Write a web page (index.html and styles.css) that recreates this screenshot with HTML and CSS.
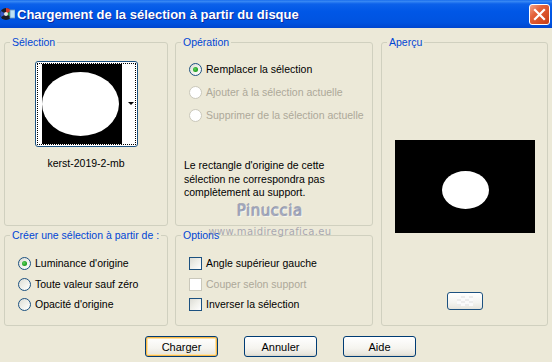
FILE: index.html
```html
<!DOCTYPE html>
<html lang="fr">
  <head>
    <meta charset="UTF-8" />
    <meta name="viewport" content="width=device-width, initial-scale=1.0" />
    <title>Chargement de la sélection à partir du disque</title>
    <link rel="stylesheet" href="styles.css">
  </head>
  <body>
    <div class="window">
      <div class="titlebar">
        <svg class="app-icon" width="15" height="14" viewBox="0 0 15 14">
          <circle cx="6" cy="7" r="6" fill="#1c1c24" />
          <path d="M6 7 L6 1 A6 6 0 0 1 11.2 4 Z" fill="#d23a2a" />
          <path d="M6 7 L11.2 4 A6 6 0 0 1 11.2 10 Z" fill="#2a9a3a" />
          <path d="M6 7 L1 10 A6 6 0 0 1 1 4 Z" fill="#3a5ac8" />
          <circle cx="6" cy="7" r="2" fill="#e8e8e8" />
          <rect x="10" y="3" width="5" height="8" fill="#bfe3f5" stroke="#6a9ac0" stroke-width="0.8" />
        </svg>
        <span class="title">Chargement de la sélection à partir du disque</span>
        <span class="close-btn">
          <svg width="13" height="13" viewBox="0 0 13 13">
            <path d="M2 2 L11 11 M11 2 L2 11" stroke="#fff" stroke-width="2.2" stroke-linecap="square" />
          </svg>
        </span>
      </div>

      <div class="content">
        <div class="columns">
          <div class="col col-left">
            <fieldset class="group group-source">
              <legend>Sélection</legend>
              <div class="thumb">
                <div class="thumb-focus">
                  <svg class="thumb-img" width="80" height="80" viewBox="0 0 80 80">
                    <rect width="80" height="80" fill="#000" />
                    <ellipse cx="38.5" cy="40" rx="38.5" ry="32" fill="#fff" />
                  </svg>
                  <span class="thumb-drop"><span class="arrow"></span></span>
                </div>
              </div>
              <div class="thumb-name">kerst-2019-2-mb</div>
            </fieldset>

            <fieldset class="group group-create">
              <legend>Créer une sélection à partir de :</legend>
              <div class="choices choices-tight">
                <div class="choice"><span class="radio checked"></span>Luminance d'origine</div>
                <div class="choice"><span class="radio"></span>Toute valeur sauf zéro</div>
                <div class="choice"><span class="radio"></span>Opacité d'origine</div>
              </div>
            </fieldset>
          </div>

          <div class="col col-mid">
            <fieldset class="group group-operation">
              <legend>Opération</legend>
              <div class="choices">
                <div class="choice"><span class="radio checked"></span>Remplacer la sélection</div>
                <div class="choice disabled"><span class="radio"></span>Ajouter à la sélection actuelle</div>
                <div class="choice disabled"><span class="radio"></span>Supprimer de la sélection actuelle</div>
              </div>
              <p class="note">Le rectangle d'origine de cette<br>sélection ne correspondra pas<br>complètement au support.</p>
            </fieldset>

            <fieldset class="group group-options">
              <legend>Options</legend>
              <div class="choices choices-tight">
                <div class="choice"><span class="check"></span>Angle supérieur gauche</div>
                <div class="choice disabled"><span class="check"></span>Couper selon support</div>
                <div class="choice"><span class="check"></span>Inverser la sélection</div>
              </div>
            </fieldset>
          </div>

          <fieldset class="group group-preview">
            <legend>Aperçu</legend>
            <svg class="preview-img" width="140" height="93" viewBox="0 0 140 93">
              <rect width="140" height="93" fill="#000" />
              <ellipse cx="70.5" cy="50" rx="23.5" ry="19" fill="#fff" />
            </svg>
            <span class="preview-btn"><span class="checker"></span></span>
          </fieldset>
        </div>

        <div class="buttons">
          <button type="button" class="btn btn-default">Charger</button>
          <button type="button" class="btn">Annuler</button>
          <button type="button" class="btn">Aide</button>
        </div>
      </div>

      <div class="watermark">
        <span class="wm-name">Pinuccia</span>
        <span class="wm-site">www.maidiregrafica.eu</span>
      </div>
    </div>
  </body>
</html>
```

FILE: styles.css
```css
* {
  box-sizing: border-box;
}

body {
  margin: 0;
  background: #ece9d8;
  font-family: "Liberation Sans", Arial, sans-serif;
  font-size: 10.5px;
  color: #000;
}

.window {
  position: relative;
  width: 552px;
  height: 362px;
  background: #ece9d8;
  overflow: hidden;
}

/* title bar */
.titlebar {
  display: flex;
  align-items: center;
  height: 28px;
  background: linear-gradient(#0a5fe8 0, #3d8df5 1px, #0c61ea 4px, #0057e6 40%, #0053e0 80%, #0046cf 100%);
  color: #fff;
}

.app-icon {
  margin-right: 2px;
}

.title {
  font-weight: bold;
  font-size: 13px;
  text-shadow: 1px 1px 0 #0f2a9c;
}

.close-btn {
  display: flex;
  align-items: center;
  justify-content: center;
  width: 21px;
  height: 21px;
  margin-left: auto;
  margin-right: 2px;
  border: 1px solid #fff;
  border-radius: 3px;
  background: linear-gradient(135deg, #f2a58c 0, #e4623a 35%, #d44b22 75%, #c23d18 100%);
}

/* body */
.content {
  padding: 8px 4px 0;
}

.columns {
  display: flex;
  gap: 7px;
  height: 290px;
}

.col {
  display: flex;
  flex-direction: column;
  gap: 3px;
}

.col-left {
  width: 164px;
}

.col-mid {
  width: 198px;
}

.group {
  margin: 0;
  padding: 0;
  min-width: 0;
  border: 1px solid #d0d0bf;
  border-radius: 3px;
}

.group legend {
  margin-left: 5px;
  padding: 0 2px;
  line-height: 13px;
  white-space: nowrap;
  color: #0046d5;
}

.group-source,
.group-operation {
  height: 190px;
}

.group-create,
.group-options {
  flex: 1;
}

.group-preview {
  flex: 1;
  margin-left: 1px;
  display: flex;
  flex-direction: column;
  align-items: center;
}

/* selection thumbnail */
.thumb {
  display: flex;
  width: 103px;
  height: 86px;
  margin: 12px auto 0;
  padding: 1px;
  border: 1px solid #1c5180;
  border-radius: 3px;
  background: #fff;
}

.thumb-focus {
  flex: 1;
  display: flex;
  padding-left: 4px;
  border: 1px dotted #000;
}

.thumb-img {
  display: block;
}

.thumb-drop {
  flex: 1;
  display: flex;
  align-items: center;
  justify-content: flex-end;
  padding: 0 1px 2px 0;
}

.arrow {
  border-left: 3px solid transparent;
  border-right: 3px solid transparent;
  border-top: 3px solid #000;
}

.thumb-name {
  margin-top: 10px;
  text-align: center;
  line-height: 13px;
}

/* radios and checkboxes */
.choices {
  display: flex;
  flex-direction: column;
  gap: 10px;
  margin: 14px 0 0 13px;
}

.choices-tight {
  gap: 7.5px;
  margin-top: 15px;
}

.choice {
  display: flex;
  align-items: center;
  gap: 4px;
  height: 13px;
  line-height: 13px;
  white-space: nowrap;
}

.radio {
  position: relative;
  flex: none;
  width: 13px;
  height: 13px;
  border: 1px solid #1c5180;
  border-radius: 50%;
  background: linear-gradient(135deg, #dcdcd5 0, #eeeee8 45%, #fff 100%);
}

.radio.checked::after {
  content: "";
  position: absolute;
  left: 3px;
  top: 3px;
  width: 5px;
  height: 5px;
  border-radius: 50%;
  background: radial-gradient(circle at 40% 40%, #5fd35f 0, #21a121 60%, #1a8a1a 100%);
}

.check {
  flex: none;
  width: 13px;
  height: 13px;
  border: 1px solid #1c5180;
  background: linear-gradient(135deg, #dcdcd5 0, #eeeee8 45%, #fff 100%);
}

.choice.disabled {
  color: #aca899;
}

.choice.disabled .radio,
.choice.disabled .check {
  border-color: #cac8bb;
  background: #fff;
}

.note {
  margin: 37px 0 0 8px;
  line-height: 13.5px;
}

/* preview */
.preview-img {
  display: block;
  margin-top: 91px;
}

.preview-btn {
  display: flex;
  align-items: center;
  justify-content: center;
  width: 36px;
  height: 18px;
  margin-top: 59px;
  border: 1px solid #1c5180;
  border-radius: 3px;
  background: linear-gradient(#fff 0, #f4f4f0 60%, #e6e4dc 100%);
}

.checker {
  width: 16px;
  height: 10px;
  background: repeating-conic-gradient(#ececec 0 25%, #fafafa 0 50%) 0 0 / 8px 5px;
}

/* buttons */
.buttons {
  display: flex;
  justify-content: center;
  gap: 26px;
  margin-top: 10px;
  padding-left: 9px;
}

.btn {
  width: 73px;
  height: 21px;
  padding: 0;
  border: 1px solid #003c74;
  border-radius: 3px;
  background: linear-gradient(#fff 0, #f5f4ef 60%, #e8e6dd 90%, #d8d4c8 100%);
  font-family: "Liberation Sans", Arial, sans-serif;
  font-size: 11px;
  color: #000;
}

.btn-default {
  box-shadow: inset 0 0 0 1px #f7b84a, inset 0 0 0 2px #fde3a6;
}

/* watermark over the dialog */
.watermark {
  position: absolute;
  left: 208px;
  top: 202px;
  width: 124px;
  display: flex;
  flex-direction: column;
  align-items: center;
  pointer-events: none;
}

.wm-name {
  font-family: "DejaVu Sans", sans-serif;
  font-size: 15px;
  letter-spacing: 0.5px;
  line-height: 18px;
  color: rgba(160, 166, 190, 0.9);
  text-shadow: -1px 0 0 rgba(110, 118, 150, 0.55), 0 -1px 0 rgba(110, 118, 150, 0.55), 1px 1px 0 rgba(255, 255, 255, 0.6);
}

.wm-site {
  margin-top: 6px;
  font-family: "DejaVu Sans", sans-serif;
  font-size: 10px;
  letter-spacing: 0.4px;
  line-height: 12px;
  color: rgba(120, 120, 150, 0.6);
}
```
